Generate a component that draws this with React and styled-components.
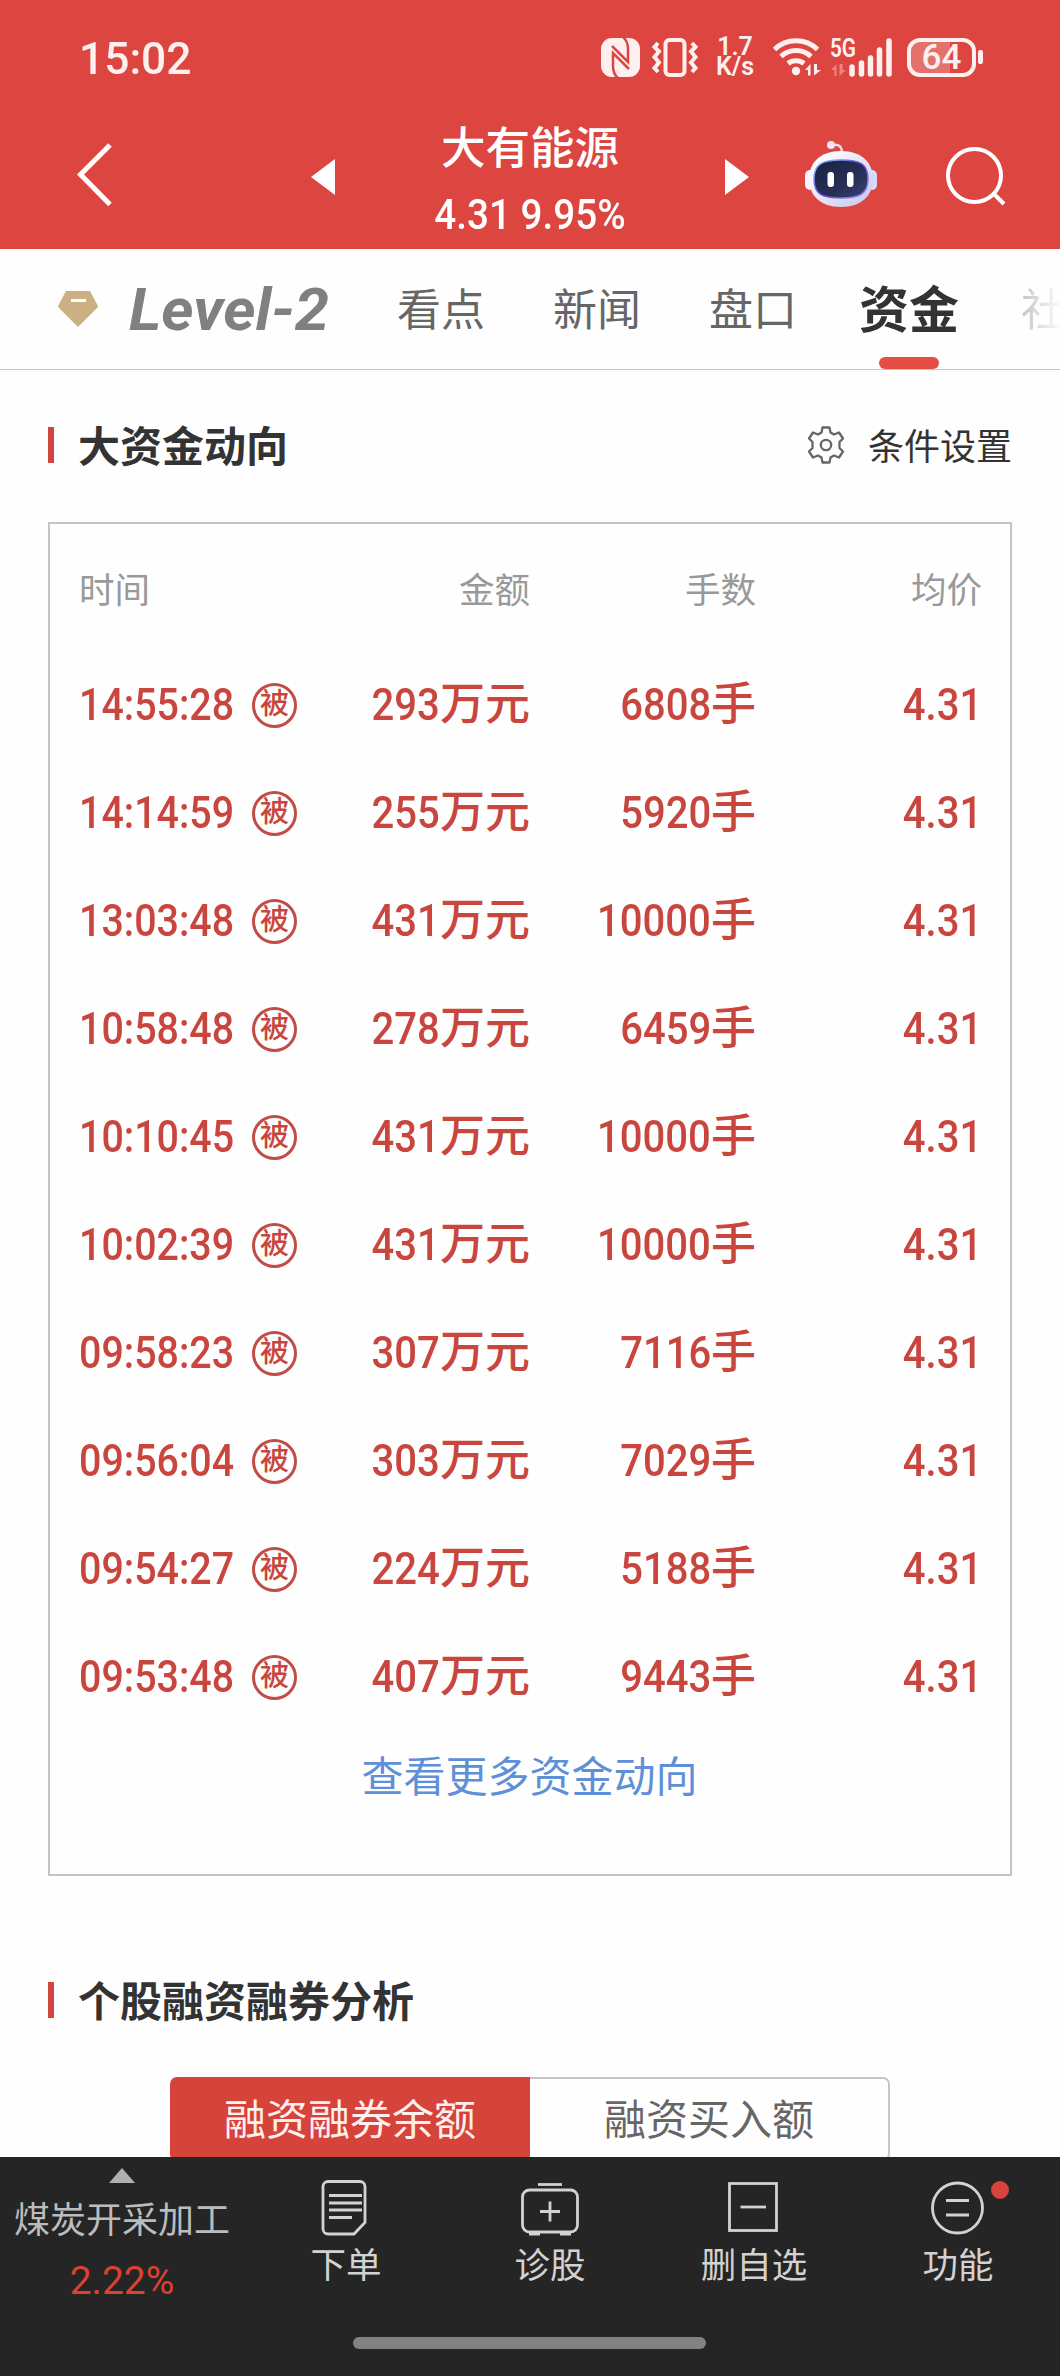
import styled, { createGlobalStyle } from "styled-components";

const GlobalStyle = createGlobalStyle`
    * {
        box-sizing: border-box;
    }
    body {
        margin: 0;
        background: #fefefe;
        font-family: Roboto, "Noto Sans CJK SC", sans-serif;
    }
    svg {
        display: block;
        flex-shrink: 0;
    }
`

const Container = styled.div`
    width: 1060px;
    height: 2376px;
    display: flex;
    flex-direction: column;
    overflow: hidden;
    background: #fefefe;
    white-space: nowrap;
`

// 顶部红色区域
const Header = styled.header`
    height: 249px;
    flex-shrink: 0;
    background: #dd4540;
    color: #fff;
`

const StatusBar = styled.div`
    height: 116px;
    padding: 0 77px 0 79px;
    display: flex;
    align-items: center;
    justify-content: space-between;
    color: #fff0f0;
`

const Clock = styled.div`
    padding-top: 2px;
    font-size: 45px;
    font-weight: 500;
    line-height: 52px;
    transform: scaleX(0.985);
    transform-origin: left;
`

const StatusIcons = styled.div`
    display: flex;
    align-items: center;
    padding-bottom: 2px;
`

const StatusIcon = styled.svg`
    margin-left: ${({ $left }) => $left || 0}px;
    overflow: visible;
`

const NetSpeed = styled.div`
    width: 40px;
    margin-left: 17px;
    display: flex;
    flex-direction: column;
    align-items: center;
    font-size: 25px;
    font-weight: 600;
    line-height: 20px;
`

const Battery = styled.div`
    width: 69px;
    height: 39px;
    margin-left: 13px;
    border: 4px solid #fff0f0;
    border-radius: 13px;
    background: linear-gradient(90deg, #e5716d 64%, transparent 64%);
    font-size: 35px;
    font-weight: 500;
    line-height: 31px;
    text-align: center;
`

const BatteryTip = styled.div`
    width: 5px;
    height: 14px;
    margin-left: 2px;
    border-radius: 2px;
    background: #fff0f0;
`

const TitleBar = styled.div`
    height: 133px;
    padding: 0 54px 0 75px;
    display: flex;
`

const BackIcon = styled.svg`
    margin-top: 26px;
`

const StockSwitch = styled.div`
    width: 438px;
    margin-left: 196px;
    display: flex;
    justify-content: space-between;
`

const SwitchIcon = styled.svg`
    margin-top: 43px;
`

const Stock = styled.div`
    display: flex;
    flex-direction: column;
    align-items: center;
`

const StockName = styled.div`
    margin-top: 5px;
    font-size: 44.5px;
    font-weight: 500;
    line-height: 56px;
`

const StockPrice = styled.div`
    margin-top: 13px;
    font-size: 42px;
    font-weight: 500;
    line-height: 50px;
    transform: scaleX(0.92);
`

const RobotIcon = styled.svg`
    margin-top: 23px;
    margin-left: 55px;
`

const SearchIcon = styled.svg`
    margin-top: 29px;
    margin-left: 66px;
`

// 标签栏
const TabBar = styled.nav`
    height: 121px;
    flex-shrink: 0;
    padding-left: 56px;
    display: flex;
    align-items: stretch;
    overflow: hidden;
    border-bottom: 1px solid #c6c6c6;
`

const DiamondIcon = styled.svg`
    margin-top: 40px;
`

const LevelTab = styled.div`
    width: 200px;
    margin-left: 29px;
    flex-shrink: 0;
    color: #808080;
    font-size: 59px;
    font-weight: 700;
    font-style: italic;
    line-height: 121px;
    transform: scaleX(1.045);
    transform-origin: left;
`

const Tab = styled.div`
    margin-left: ${({ $active, $fade }) => ($active || $fade ? 62 : 68)}px;
    flex-shrink: 0;
    display: flex;
    flex-direction: column;
    align-items: center;
    color: ${({ $active }) => ($active ? "#333" : "#666")};
    font-size: ${({ $active }) => ($active ? 50 : 44)}px;
    font-weight: ${({ $active }) => ($active ? 700 : 400)};
    line-height: 124px;
    ${({ $fade }) => $fade && `
        width: 44px;
        background: linear-gradient(90deg, #c4c4c4, #fefefe 95%);
        background-clip: text;
        color: transparent;
    `}
`

const TabLine = styled.div`
    width: 60px;
    height: 12px;
    margin-top: -16px;
    flex-shrink: 0;
    border-radius: 6px;
    background: #e54d42;
`

const Main = styled.main`
    flex: 1;
    min-height: 0;
    overflow: hidden;
    padding: 0 48px;
`

const SectionHead = styled.div`
    height: 60px;
    margin-top: ${({ $top }) => $top}px;
    display: flex;
    align-items: center;
`

const SectionMark = styled.div`
    width: 6px;
    height: 36px;
    background: #cf463e;
`

const SectionTitle = styled.h2`
    margin: 0 0 0 24px;
    padding-top: 5px;
    color: #333;
    font-size: 42px;
    font-weight: 700;
    line-height: 60px;
`

const Setting = styled.div`
    margin-left: auto;
    display: flex;
    align-items: center;
    gap: 23px;
    color: #333;
    font-size: 36px;
    line-height: 60px;
`

const SettingText = styled.span`
    padding-top: 6px;
`

// 资金动向表格
const Card = styled.section`
    height: 1354px;
    margin-top: 47px;
    padding: 34px 28px 0 29px;
    border: 2px solid #c4c4c4;
`

const Row = styled.div`
    height: 108px;
    display: grid;
    grid-template-columns: 173px 278px 226px 1fr;
    align-items: center;
    color: #c9463f;
    font-size: 45px;
    font-weight: 500;
    line-height: 60px;
`

const HeadRow = styled(Row)`
    height: 66px;
    margin-bottom: 27px;
    color: #999;
    font-size: 35.5px;
    font-weight: 400;
`

const Cell = styled.div`
    text-align: ${({ $left }) => ($left ? "left" : "right")};
`

// 数字比默认字体略窄
const Digits = styled.span`
    display: inline-block;
    transform: scaleX(${({ $left }) => ($left ? 0.875 : 0.89)});
    transform-origin: ${({ $left }) => ($left ? "left" : "right")};
`

const AmountCell = styled.div`
    display: flex;
    align-items: center;
    justify-content: space-between;
`

const Badge = styled.span`
    width: 45px;
    height: 45px;
    border: 3px solid #c14d46;
    border-radius: 50%;
    font-size: 29px;
    line-height: 37px;
    text-align: center;
`

const MoreLink = styled.div`
    margin-top: 17px;
    padding-right: 2px;
    color: #5f8fd6;
    font-size: 42px;
    line-height: 60px;
    text-align: center;
`

const Segment = styled.div`
    width: 720px;
    height: 84px;
    margin: 47px auto 0;
    display: flex;
`

const SegmentItem = styled.div`
    width: 360px;
    padding-top: 2px;
    border: 2px solid ${({ $active }) => ($active ? "#d5433b" : "#c6c6c6")};
    border-left-width: ${({ $active }) => ($active ? 2 : 0)}px;
    border-radius: ${({ $active }) => ($active ? "7px 0 0 7px" : "0 7px 7px 0")};
    background: ${({ $active }) => ($active ? "#d5433b" : "#fefefe")};
    color: ${({ $active }) => ($active ? "#fff0ef" : "#666")};
    font-size: 42px;
    line-height: 80px;
    text-align: center;
`

// 底部导航
const BottomBar = styled.footer`
    height: 219px;
    flex-shrink: 0;
    background: #252525;
`

const BottomItems = styled.div`
    height: 180px;
    display: flex;
`

const Sector = styled.div`
    width: 244px;
    display: flex;
    flex-direction: column;
    align-items: center;
    color: #bcbcbc;
    font-size: 36px;
    line-height: 50px;
`

const SectorArrow = styled.svg`
    margin: 11px 0 13px;
`

const SectorRate = styled.div`
    margin-top: 10px;
    color: #dc4231;
    font-size: 39px;
    line-height: 50px;
`

const NavItem = styled.div`
    position: relative;
    flex: 1;
    display: flex;
    flex-direction: column;
    align-items: center;
    color: #d2d2d2;
    font-size: 35.5px;
    line-height: 50px;
`

const NavIcon = styled.svg`
    margin: 22px 0 2px;
    fill: none;
    stroke: #d2d2d2;
    stroke-width: 2.8;
`

const RedDot = styled.i`
    position: absolute;
    top: 24px;
    right: 51px;
    width: 18px;
    height: 18px;
    border-radius: 50%;
    background: #d8443c;
`

const HomeLine = styled.div`
    width: 353px;
    height: 12px;
    margin: 0 0 0 353px;
    border-radius: 6px;
    background: #828282;
`

const tabs = ["看点", "新闻", "盘口", "资金", "社"];

const trades = [
    { time: "14:55:28", amount: 293, hands: 6808, price: "4.31" },
    { time: "14:14:59", amount: 255, hands: 5920, price: "4.31" },
    { time: "13:03:48", amount: 431, hands: 10000, price: "4.31" },
    { time: "10:58:48", amount: 278, hands: 6459, price: "4.31" },
    { time: "10:10:45", amount: 431, hands: 10000, price: "4.31" },
    { time: "10:02:39", amount: 431, hands: 10000, price: "4.31" },
    { time: "09:58:23", amount: 307, hands: 7116, price: "4.31" },
    { time: "09:56:04", amount: 303, hands: 7029, price: "4.31" },
    { time: "09:54:27", amount: 224, hands: 5188, price: "4.31" },
    { time: "09:53:48", amount: 407, hands: 9443, price: "4.31" },
];

const navs = [
    {
        name: "下单",
        icon: <>
            <path d="M12 2.500H44a5 5 0 0 1 5 5V43.500L38 55H12a5 5 0 0 1-5-5V7.500a5 5 0 0 1 5-5Z" />
            <path d="M13 16.500H46M13 24H46M13 31H46M13 38.500H36" />
        </>,
    },
    {
        name: "诊股",
        icon: <>
            <path d="M18 5.500H42" />
            <rect x="2.500" y="11" width="55" height="42" rx="7" />
            <path d="M20 32.500H40M30 22.500V42.500" />
            <path d="M9 54.500H20M40 54.500H51" strokeWidth="4" />
        </>,
    },
    {
        name: "删自选",
        icon: <>
            <rect x="5.500" y="4.500" width="47" height="47" />
            <path d="M16.500 28H42" />
        </>,
    },
    {
        name: "功能",
        dot: true,
        icon: <>
            <circle cx="29.500" cy="29" r="25" />
            <path d="M18 21.500H41M18 36H41" />
        </>,
    },
];

function StatusBarIcons(){
    return(
        <StatusIcons>
            {/* NFC */}
            <StatusIcon width="39" height="39" viewBox="0 0 39 39">
                <rect width="39" height="39" rx="11" fill="#fff0f0" />
                <path d="M22 -1Q27 3 27 11V24L11 8M17 40Q12 36 12 28V15L28 31" fill="none" stroke="#dd4540" strokeWidth="2.500" />
            </StatusIcon>
            {/* 振动 */}
            <StatusIcon $left={12} width="46" height="39" viewBox="0 0 46 39" fill="none" stroke="#fff0f0" strokeWidth="4">
                <rect x="13.500" y="2" width="19" height="35" rx="4" />
                <path d="M6 5L2.500 9L7 13.500L2.500 19L7 24.500L2.500 30L6 34M40 5L43.500 9L39 13.500L43.500 19L39 24.500L43.500 30L40 34" />
            </StatusIcon>
            <NetSpeed>
                <span>1.7</span>
                <span>K/s</span>
            </NetSpeed>
            {/* WiFi */}
            <StatusIcon $left={18} width="50" height="39" viewBox="0 0 50 39" fill="none" stroke="#fff0f0" strokeWidth="5">
                <path d="M1.500 11.500A31 31 0 0 1 44.500 11.500M8 18.500A22 22 0 0 1 38 18.500M15 25.500A13 13 0 0 1 31 25.500" />
                <circle cx="23" cy="33" r="4.200" fill="#fff0f0" stroke="none" />
                <path d="M32 32L37.500 26V37.500H35V32ZM41 26V37.500L48 32H44V26Z" fill="#fff0f0" stroke="none" />
            </StatusIcon>
            {/* 5G 信号 */}
            <StatusIcon $left={8} width="63" height="39" viewBox="0 0 63 39">
                <text x="-1" y="19" fill="#fff0f0" fontSize="25" fontWeight="600" textLength="26" lengthAdjust="spacingAndGlyphs">5G</text>
                <path d="M0 32L5.500 26V38H3.500V32ZM8.500 26V38L15 32H11.500V26Z" fill="#ea8582" />
                <path d="M21 29V36M30.500 25V36M39.500 20V36M48.500 12V36M58 3V36" stroke="#fff0f0" strokeWidth="5.500" strokeLinecap="round" />
            </StatusIcon>
            <Battery>64</Battery>
            <BatteryTip />
        </StatusIcons>
    )
}

function Robot(){
    return(
        <RobotIcon width="74" height="70" viewBox="0 0 74 70">
            <defs>
                <linearGradient id="head" x1="0" y1="0" x2="1" y2="1">
                    <stop offset="0.200" stopColor="#fbf9ff" />
                    <stop offset="1" stopColor="#c3c6ef" />
                </linearGradient>
                <linearGradient id="rim" x1="0" y1="0" x2="1" y2="1">
                    <stop offset="0" stopColor="#8fd5f2" />
                    <stop offset="0.500" stopColor="#6f45d8" />
                    <stop offset="1" stopColor="#8f96f5" />
                </linearGradient>
                <linearGradient id="face" x1="0" y1="0" x2="1" y2="1">
                    <stop offset="0" stopColor="#1b2145" />
                    <stop offset="0.600" stopColor="#272f56" />
                    <stop offset="1" stopColor="#3c4472" />
                </linearGradient>
            </defs>
            <path d="M28 6Q38 4 38 14" fill="none" stroke="#f3dce6" strokeWidth="2.500" />
            <circle cx="27" cy="6" r="4" fill="#f3e6f3" />
            <rect x="1" y="31" width="10" height="20" rx="5" fill="#f4f2ff" />
            <rect x="63" y="31" width="10" height="20" rx="5" fill="#d9d9f8" />
            <path d="M37 12C58 12 69 24 69 40S58 68 37 68S5 56 5 40S16 12 37 12Z" fill="url(#head)" />
            <path d="M37 21C56 21 64 25 64 40S56 59 37 59S10 55 10 40S18 21 37 21Z" fill="url(#face)" stroke="url(#rim)" strokeWidth="1.500" />
            <rect x="23.500" y="33" width="6.500" height="15" rx="3" fill="#fff" />
            <rect x="43" y="33" width="6.500" height="15" rx="3" fill="#fff" />
        </RobotIcon>
    )
}

function Gear(){
    return(
        <svg width="38" height="38" viewBox="0 0 38 38" fill="none" stroke="#666" strokeWidth="2.300" strokeLinejoin="round">
            <path d="M15.500 1.500H22.500L23.500 6.500L27 8.500L32 6.500L36 12.500L32.500 16V22L36 25.500L32 31.500L27 29.500L23.500 31.500L22.500 36.500H15.500L14.500 31.500L11 29.500L6 31.500L2 25.500L5.500 22V16L2 12.500L6 6.500L11 8.500L14.500 6.500Z" />
            <circle cx="19" cy="19" r="5.200" />
        </svg>
    )
}

export default function App(){
    return(
        <Container>
            <GlobalStyle />
            <Header>
                <StatusBar>
                    <Clock>15:02</Clock>
                    <StatusBarIcons />
                </StatusBar>
                <TitleBar>
                    <BackIcon width="40" height="66" viewBox="0 0 40 66" fill="none" stroke="#fff" strokeWidth="5">
                        <path d="M35 3L5.500 32.500L35 62.500" />
                    </BackIcon>
                    <StockSwitch>
                        <SwitchIcon width="24" height="36" viewBox="0 0 24 36">
                            <path d="M0 18L24 0V36Z" fill="#fff" />
                        </SwitchIcon>
                        <Stock>
                            <StockName>大有能源</StockName>
                            <StockPrice>4.31 9.95%</StockPrice>
                        </Stock>
                        <SwitchIcon width="24" height="36" viewBox="0 0 24 36">
                            <path d="M24 18L0 0V36Z" fill="#fff" />
                        </SwitchIcon>
                    </StockSwitch>
                    <Robot />
                    <SearchIcon width="62" height="62" viewBox="0 0 62 62" fill="none" stroke="#fff" strokeWidth="4">
                        <circle cx="30.500" cy="30.500" r="26.500" />
                        <path d="M49 48L60 59" />
                    </SearchIcon>
                </TitleBar>
            </Header>
            <TabBar>
                <DiamondIcon width="44" height="40" viewBox="0 0 44 40">
                    <path d="M10 2H34L42 17Q42 18 41 19L23 37Q22 38 21 37L3 19Q2 18 2 17Z" fill="#cbb083" />
                    <path d="M15 11.500H30" stroke="#fff" strokeWidth="3" />
                </DiamondIcon>
                <LevelTab>Level-2</LevelTab>
                {tabs.map((tab) => (
                    <Tab key={tab} $active={tab === "资金"} $fade={tab === "社"}>
                        {tab}
                        {tab === "资金" && <TabLine />}
                    </Tab>
                ))}
            </TabBar>
            <Main>
                <SectionHead $top={45}>
                    <SectionMark />
                    <SectionTitle>大资金动向</SectionTitle>
                    <Setting>
                        <Gear />
                        <SettingText>条件设置</SettingText>
                    </Setting>
                </SectionHead>
                <Card>
                    <HeadRow>
                        <Cell $left>时间</Cell>
                        <Cell>金额</Cell>
                        <Cell>手数</Cell>
                        <Cell>均价</Cell>
                    </HeadRow>
                    {trades.map((item) => (
                        <Row key={item.time}>
                            <Cell $left><Digits $left>{item.time}</Digits></Cell>
                            <AmountCell>
                                <Badge>被</Badge>
                                <span><Digits>{item.amount}</Digits>万元</span>
                            </AmountCell>
                            <Cell><Digits>{item.hands}</Digits>手</Cell>
                            <Cell><Digits>{item.price}</Digits></Cell>
                        </Row>
                    ))}
                    <MoreLink>查看更多资金动向</MoreLink>
                </Card>
                <SectionHead $top={94}>
                    <SectionMark />
                    <SectionTitle>个股融资融券分析</SectionTitle>
                </SectionHead>
                <Segment>
                    <SegmentItem $active>融资融券余额</SegmentItem>
                    <SegmentItem>融资买入额</SegmentItem>
                </Segment>
            </Main>
            <BottomBar>
                <BottomItems>
                    <Sector>
                        <SectorArrow width="26" height="15" viewBox="0 0 26 15">
                            <path d="M13 0L26 15H0Z" fill="#b0b0b0" />
                        </SectorArrow>
                        煤炭开采加工
                        <SectorRate>2.22%</SectorRate>
                    </Sector>
                    {navs.map((item) => (
                        <NavItem key={item.name}>
                            <NavIcon width="60" height="60" viewBox="0 0 60 60">{item.icon}</NavIcon>
                            {item.name}
                            {item.dot && <RedDot />}
                        </NavItem>
                    ))}
                </BottomItems>
                <HomeLine />
            </BottomBar>
        </Container>
    )
}
